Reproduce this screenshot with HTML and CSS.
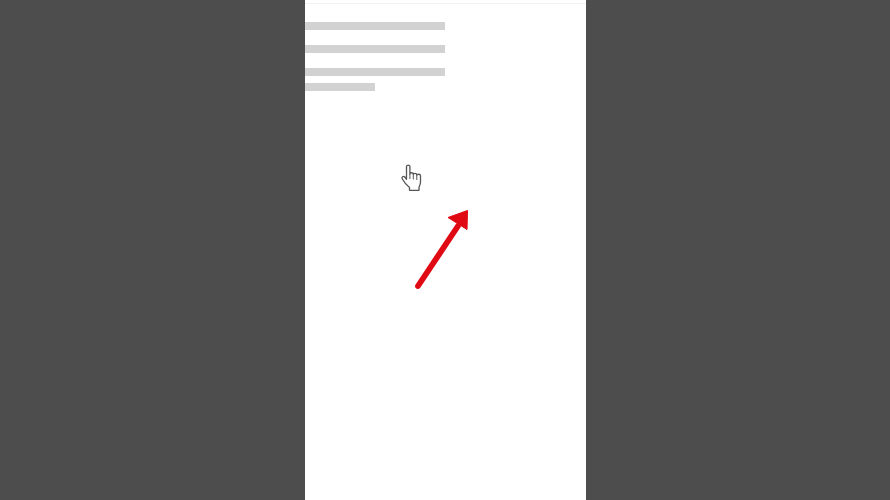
FILE: index.html
```html
<!DOCTYPE html>
<html lang="en">
<head>
<meta charset="utf-8">
<title>Tutorial frame</title>
<link rel="stylesheet" href="styles.css">
</head>
<body>
<div class="stage">
  <main class="phone">
    <div class="topline"></div>
    <div class="lines">
      <div class="line"></div>
      <div class="line"></div>
      <div class="group">
        <div class="line"></div>
        <div class="line short"></div>
      </div>
    </div>
    <svg class="cursor" viewBox="0 0 24 30" width="24" height="30" aria-hidden="true">
      <path d="M6.500 3.600c0-1.900 3.400-1.900 3.400 0v7.400c0-1.700 3.400-1.700 3.400 0v.6c0-1.700 3.500-1.700 3.500 0v.9c0-1.700 3.700-1.700 3.700.2v6.300c0 2.300-.8 3.800-1.500 5.300v3H9.500v-2.800c-2.500-2-5.400-5.300-7.300-8.800-.9-1.700 1.200-3.100 2.600-1.700l1.700 2.300z" fill="#fff" stroke="#555" stroke-width="1.300" stroke-linejoin="round"/>
      <path d="M9.900 11v5M13.300 11.500v5M16.800 12.500v4.500" fill="none" stroke="#555" stroke-width="1"/>
    </svg>
    <svg class="arrow" viewBox="0 0 60 84" width="60" height="84" aria-hidden="true">
      <path d="M5 79 45 19" fill="none" stroke="#e00a14" stroke-width="5.800" stroke-linecap="round"/>
      <path d="M35 10.500 54.500 3.500 54 22.500z" fill="#e00a14" stroke="#e00a14" stroke-width="1" stroke-linejoin="round"/>
    </svg>
  </main>
</div>
</body>
</html>
```
FILE: styles.css
```css
* { box-sizing: border-box; }
html, body { margin: 0; height: 100%; }
body { background: #4d4d4d; overflow: hidden; }
.stage { height: 500px; padding-left: 305px; }
.phone { position: relative; width: 281px; height: 500px; background: #fff; padding-top: 3px; }
.topline { height: 1px; background: #f2f2f2; }
.lines { display: flex; flex-direction: column; gap: 15px; padding-top: 18px; }
.group { display: flex; flex-direction: column; gap: 7px; }
.line { width: 140px; height: 8px; background: #d2d2d2; }
.line.short { width: 70px; height: 8px; }
.cursor { position: absolute; left: 95px; top: 163px; }
.arrow { position: absolute; left: 108px; top: 207px; }
```
